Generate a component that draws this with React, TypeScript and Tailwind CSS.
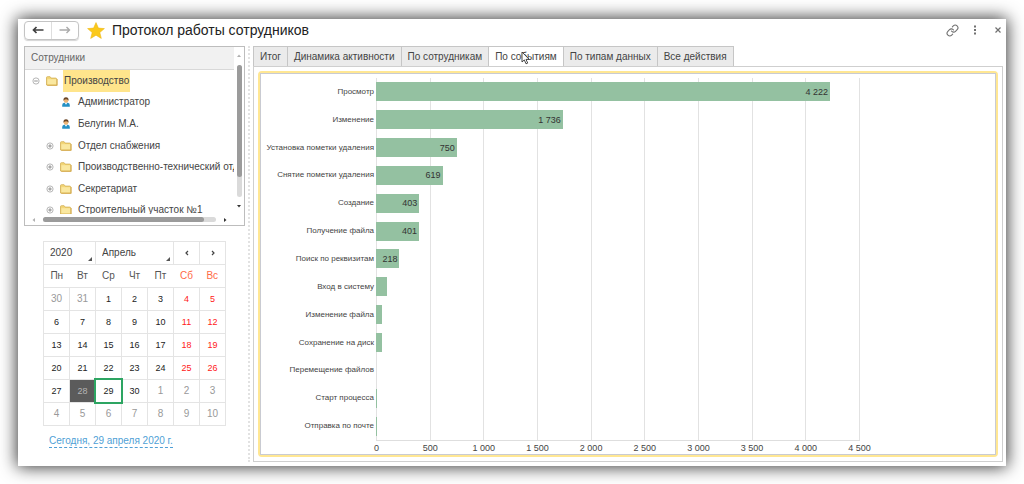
import { useState } from "react";
import type { ReactNode } from "react";
import clsx from "clsx";
import { Link } from "lucide-react";

interface ITreeItem {
  title: string;
  kind: "root" | "folder" | "user";
}

interface IEvent {
  name: string;
  value: number;
  label?: string;
}

const employees: ITreeItem[] = [
  { title: "Производство", kind: "root" },
  { title: "Администратор", kind: "user" },
  { title: "Белугин М.А.", kind: "user" },
  { title: "Отдел снабжения", kind: "folder" },
  { title: "Производственно-технический отдел", kind: "folder" },
  { title: "Секретариат", kind: "folder" },
  { title: "Строительный участок №1", kind: "folder" },
];

const tabs = [
  "Итог",
  "Динамика активности",
  "По сотрудникам",
  "По событиям",
  "По типам данных",
  "Все действия",
];

const events: IEvent[] = [
  { name: "Просмотр", value: 4222, label: "4 222" },
  { name: "Изменение", value: 1736, label: "1 736" },
  { name: "Установка пометки удаления", value: 750, label: "750" },
  { name: "Снятие пометки удаления", value: 619, label: "619" },
  { name: "Создание", value: 403, label: "403" },
  { name: "Получение файла", value: 401, label: "401" },
  { name: "Поиск по реквизитам", value: 218, label: "218" },
  { name: "Вход в систему", value: 98 },
  { name: "Изменение файла", value: 54 },
  { name: "Сохранение на диск", value: 53 },
  { name: "Перемещение файлов", value: 0 },
  { name: "Старт процесса", value: 8 },
  { name: "Отправка по почте", value: 8 },
];

const MAX_VALUE = 4500;
const axis = ["0", "500", "1 000", "1 500", "2 000", "2 500", "3 000", "3 500", "4 000", "4 500"];

const weekDays = ["Пн", "Вт", "Ср", "Чт", "Пт", "Сб", "Вс"];
const weeks = [
  [30, 31, 1, 2, 3, 4, 5],
  [6, 7, 8, 9, 10, 11, 12],
  [13, 14, 15, 16, 17, 18, 19],
  [20, 21, 22, 23, 24, 25, 26],
  [27, 28, 29, 30, 1, 2, 3],
  [4, 5, 6, 7, 8, 9, 10],
];

const FolderIcon = () => (
  <svg viewBox="0 0 12 10" className="w-3 h-[10px] shrink-0">
    <path
      d="M.5 9V1.6Q.5.7 1.4.7h2.7l1.1 1.4h4.6q.8 0 .8.8V9Z"
      fill="#f3d677"
      stroke="#d2ae55"
      strokeWidth=".8"
    />
    <path d="M1.4 3.2h8.8v5.2H1.4Z" fill="#fae8a0" />
    <path d="M11.2 3v6.4H1.2" fill="none" stroke="#d5a94b" strokeWidth=".9" />
  </svg>
);

const UserIcon = () => (
  <svg viewBox="0 0 8 10" className="w-2 h-[10px] shrink-0">
    <path d="M.2 9.800V8Q.2 6 2.200 5.800h3.600Q7.800 6 7.800 8v1.800Z" fill="#2590c4" />
    <path d="m2.700 5.700 1.300 2 1.300-2Z" fill="#fff" />
    <circle cx="4" cy="3.500" r="2.300" fill="#efb676" />
    <path d="M1.500 3.800Q1 .2 4 .2t2.500 3.600Q6 2.200 4 2.300T1.500 3.800Z" fill="#6b4526" />
  </svg>
);

const ExpandIcon = ({ open }: { open: boolean }) => (
  <svg viewBox="0 0 8 8" className="w-2 h-2" fill="none" stroke="#a3a3a3" strokeWidth=".8">
    <circle cx="4" cy="4" r="3.100" />
    <path d={open ? "M2.200 4h3.600" : "M2.200 4h3.600M4 2.200v3.600"} stroke="#777" />
  </svg>
);

const Arrow = ({ className, d }: { className?: string; d: string }) => (
  <svg viewBox="0 0 6 6" className={clsx("size-[6px] shrink-0", className)}>
    <path d={d} fill="currentColor" />
  </svg>
);

const Header = () => (
  <header className="flex items-center h-[22px] pl-[6px] pr-1">
    <div className="flex h-[19px] rounded-sm border border-[#c4c4c4] shadow-[0_1px_1px_#d4d4d4]">
      <button aria-label="Назад" className="w-[27px] grid place-items-center border-r border-[#dedede]">
        <svg viewBox="0 0 12 8" className="w-3 h-2" fill="none" stroke="#3f3f3f" strokeWidth="1.700">
          <path d="M11.500 4H1.500M4.500 1 1.500 4l3 3" />
        </svg>
      </button>
      <button aria-label="Вперед" className="w-[26px] grid place-items-center">
        <svg viewBox="0 0 12 8" className="w-3 h-2" fill="none" stroke="#ababab" strokeWidth="1.400">
          <path d="M.5 4h10M7.500 1l3 3-3 3" />
        </svg>
      </button>
    </div>
    <svg viewBox="0 0 18 17" className="w-[18px] h-[17px] ml-2">
      <path
        d="m9 .6 2.400 5.500 6 .5-4.600 3.900 1.500 5.900L9 13.200l-5.300 3.200 1.500-5.900L.6 6.600l6-.5Z"
        fill="#fbc91b"
        stroke="#eeb91a"
        strokeWidth=".6"
      />
    </svg>
    <h1 className="ml-[7px] text-[14px] leading-5 text-[#222] whitespace-nowrap">
      Протокол работы сотрудников
    </h1>
    <div className="ml-auto flex items-center text-[#707070]">
      <button aria-label="Получить ссылку" className="mr-[14px]">
        <Link size={13} strokeWidth={2} />
      </button>
      <button aria-label="Меню" className="mr-[17px]">
        <svg viewBox="0 0 4 10" className="w-1 h-[10px]" fill="currentColor">
          <path d="M1 .5h2v2H1zM1 4h2v2H1zM1 7.500h2v2H1z" />
        </svg>
      </button>
      <button aria-label="Закрыть">
        <svg viewBox="0 0 8 8" className="size-2" fill="none" stroke="currentColor" strokeWidth="1.200">
          <path d="m1.500 1.500 5 5m0-5-5 5" />
        </svg>
      </button>
    </div>
  </header>
);

const EmployeeTree = () => (
  <section className="border border-[#bdbdbd] flex">
    <div className="flex-1 min-w-0">
      <h2 className="h-[23px] flex items-center pl-[6px] bg-[#f1f1f1] border-b border-[#d8d8d8] text-[#666]">
        Сотрудники
      </h2>
      <div className="h-36 overflow-hidden">
        <ul className="h-[151px] flex flex-col">
          {employees.map((item) => (
            <li
              key={item.title}
              className={clsx(
                "flex-1 flex items-center whitespace-nowrap",
                item.kind === "root" ? "pl-[7px]" : "pl-[21px]"
              )}
            >
              <span className="w-[14px] shrink-0 flex items-center">
                {item.kind !== "user" && (
                  <button aria-label={item.title}>
                    <ExpandIcon open={item.kind === "root"} />
                  </button>
                )}
              </span>
              <span className="w-[15px] shrink-0 flex items-center">
                {item.kind === "user" ? <span className="pl-[2px]"><UserIcon /></span> : <FolderIcon />}
              </span>
              <span
                className={clsx(
                  "h-full flex items-center",
                  item.kind === "root" ? "ml-[2px] px-px bg-[#ffe58c]" : "ml-[3px]"
                )}
              >
                {item.title}
              </span>
            </li>
          ))}
        </ul>
      </div>
      <div className="h-[11px] flex items-center px-[6px] gap-[6px]">
        <Arrow className="text-[#b0b0b0]" d="M4 1v4L1.500 3Z" />
        <div className="flex-1 h-[5px] rounded-full bg-[#dadada]">
          <div className="w-[93%] h-full rounded-full bg-[#9b9b9b]" />
        </div>
        <Arrow className="text-[#333]" d="M2 1v4l2.500-2Z" />
      </div>
    </div>
    <div className="w-[10px] pt-[6px] pb-4 flex flex-col items-center gap-[6px]">
      <Arrow className="text-[#b0b0b0]" d="M1 4h4L3 1.500Z" />
      <div className="flex-1 w-[5px] rounded-full bg-[#dadada]">
        <div className="h-[85%] rounded-full bg-[#9b9b9b]" />
      </div>
      <Arrow className="text-[#333]" d="M1 2h4L3 4.500Z" />
    </div>
  </section>
);

const PickerCell = ({ span, children }: { span: number; children: ReactNode }) => (
  <td colSpan={span} className="border border-[#e4e4e4] relative p-0">
    {children}
    <Arrow className="absolute right-[2px] bottom-[2px] text-[#555] pointer-events-none" d="M5 1v4H1Z" />
  </td>
);

const Calendar = () => {
  const [selected, setSelected] = useState("4-1");
  return (
    <section className="px-[19px] mt-[15px]">
      <table className="w-full table-fixed border-collapse text-center">
        <thead>
          <tr className="h-[23px]">
            <PickerCell span={2}>
              <select aria-label="Год" className="appearance-none w-full pl-[6px] bg-transparent">
                <option>2020</option>
              </select>
            </PickerCell>
            <PickerCell span={3}>
              <select aria-label="Месяц" className="appearance-none w-full pl-[6px] bg-transparent">
                <option>Апрель</option>
              </select>
            </PickerCell>
            {["M4 1 2 3l2 2", "m2 1 2 2-2 2"].map((d, i) => (
              <td key={d} className="border border-[#e4e4e4] p-0">
                <button aria-label={i ? "Следующий месяц" : "Предыдущий месяц"} className="w-full grid place-items-center">
                  <svg viewBox="0 0 6 6" className="size-[6px]" fill="none" stroke="#444" strokeWidth="1.200">
                    <path d={d} />
                  </svg>
                </button>
              </td>
            ))}
          </tr>
          <tr className="h-[23px] border border-[#e4e4e4]">
            {weekDays.map((day, i) => (
              <th key={day} className={clsx("p-0 font-normal", i > 4 ? "text-[#ff6a45]" : "text-[#555]")}>
                {day}
              </th>
            ))}
          </tr>
        </thead>
        <tbody className="text-[9px] leading-3">
          {weeks.map((week, w) => (
            <tr key={w} className="h-[23px]">
              {week.map((day, d) => {
                const id = `${w}-${d}`;
                const outside = (w === 0 && day > 7) || (w > 3 && day < 11);
                return (
                  <td key={id} className="border border-[#e4e4e4] p-0 h-[23px]">
                    <button
                      onClick={() => setSelected(id)}
                      className={clsx(
                        "w-full h-[22px] block",
                        outside && "text-[#999] text-[10px]",
                        !outside && id !== selected && (d > 4 ? "text-[#ff2020]" : "text-[#222]"),
                        id === selected && "bg-[#5b5b5b] text-[#b5b5b5]",
                        id === "4-2" && "outline-2 outline-[#2da562]"
                      )}
                    >
                      {day}
                    </button>
                  </td>
                );
              })}
            </tr>
          ))}
        </tbody>
      </table>
      <a href="#today" className="inline-block ml-[6px] mt-2 leading-[13px] text-[#4f9fd6] border-b border-dashed border-[#4f9fd6] whitespace-nowrap">
        Сегодня, 29 апреля 2020 г.
      </a>
    </section>
  );
};

const EventsChart = () => (
  <div className="flex-1 flex flex-col border-2 border-[#ffe793] rounded-sm">
    <div className="flex-1 flex border border-[#c9cbd2] pt-1 pr-[135px] text-[9px] leading-3 text-[#444]">
      <div className="w-[115px] shrink-0 flex flex-col pb-[14px] text-[8px]">
        {events.map((event) => (
          <div key={event.name} className="flex-1 flex items-center justify-end pr-[2px] whitespace-nowrap">
            {event.name}
          </div>
        ))}
      </div>
      <div className="flex-1 min-w-0 flex flex-col">
        <div className="flex-1 grid border-b border-[#dedede]">
          <div className="col-start-1 row-start-1 flex justify-between">
            {axis.map((mark) => (
              <span key={mark} className="w-px bg-[#e2e2e2]" />
            ))}
          </div>
          <div className="col-start-1 row-start-1 flex flex-col z-10">
            {events.map((event) => (
              <div key={event.name} className="flex-1 flex items-center">
                <div
                  className="h-[19px] flex items-center justify-end bg-[#94c1a1]"
                  style={{ width: `${(event.value / MAX_VALUE) * 100}%` }}
                >
                  {event.label && <span className="pr-[2px] text-[#333] whitespace-nowrap">{event.label}</span>}
                </div>
              </div>
            ))}
          </div>
        </div>
        <div className="h-[13px] flex justify-between items-end">
          {axis.map((mark) => (
            <span key={mark} className="w-px flex justify-center whitespace-nowrap">
              {mark}
            </span>
          ))}
        </div>
      </div>
    </div>
  </div>
);

const Report = () => {
  const [active, setActive] = useState("По событиям");
  return (
    <main className="flex-1 min-w-0 flex flex-col">
      <div role="tablist" className="flex pr-1">
        {tabs.map((tab, i) => (
          <button
            key={tab}
            role="tab"
            aria-selected={active === tab}
            onClick={() => setActive(tab)}
            className={clsx(
              "relative h-5 px-[6px] border-t border-r border-[#c6c6c6] whitespace-nowrap",
              i === 0 && "border-l",
              active === tab ? "bg-white -mb-px z-10" : "bg-[#ebebeb]"
            )}
          >
            {tab}
            {tab === "По событиям" && (
              <svg viewBox="0 0 9 14" className="absolute left-8 top-1 w-[9px] h-[14px]">
                <path d="M1 1v10l2.300-2.100L5 12.800l1.700-.7L5 8.400h3.200Z" fill="#fff" stroke="#333" strokeWidth=".9" />
              </svg>
            )}
          </button>
        ))}
      </div>
      <div className="flex-1 flex flex-col border border-[#cfcfcf] p-1">
        <EventsChart />
      </div>
    </main>
  );
};

const App = () => {
  return (
    <div className="min-h-screen flex flex-col bg-white px-[18px] pt-[19px] pb-[18px] font-['Liberation_Sans',Arial,sans-serif] text-[10px] leading-4 text-[#444]">
      <div className="flex-1 flex flex-col bg-white shadow-[0_0_16px_1px_rgba(0,0,0,0.8)]">
        <Header />
        <div className="flex-1 flex pt-[5px] pb-1 pl-[6px] pr-[3px]">
          <aside className="w-[221px] shrink-0">
            <EmployeeTree />
            <Calendar />
          </aside>
          <div className="mx-[3px] border-l-2 border-dotted border-[#e2e2e2]" />
          <Report />
        </div>
      </div>
    </div>
  );
};

export default App;
